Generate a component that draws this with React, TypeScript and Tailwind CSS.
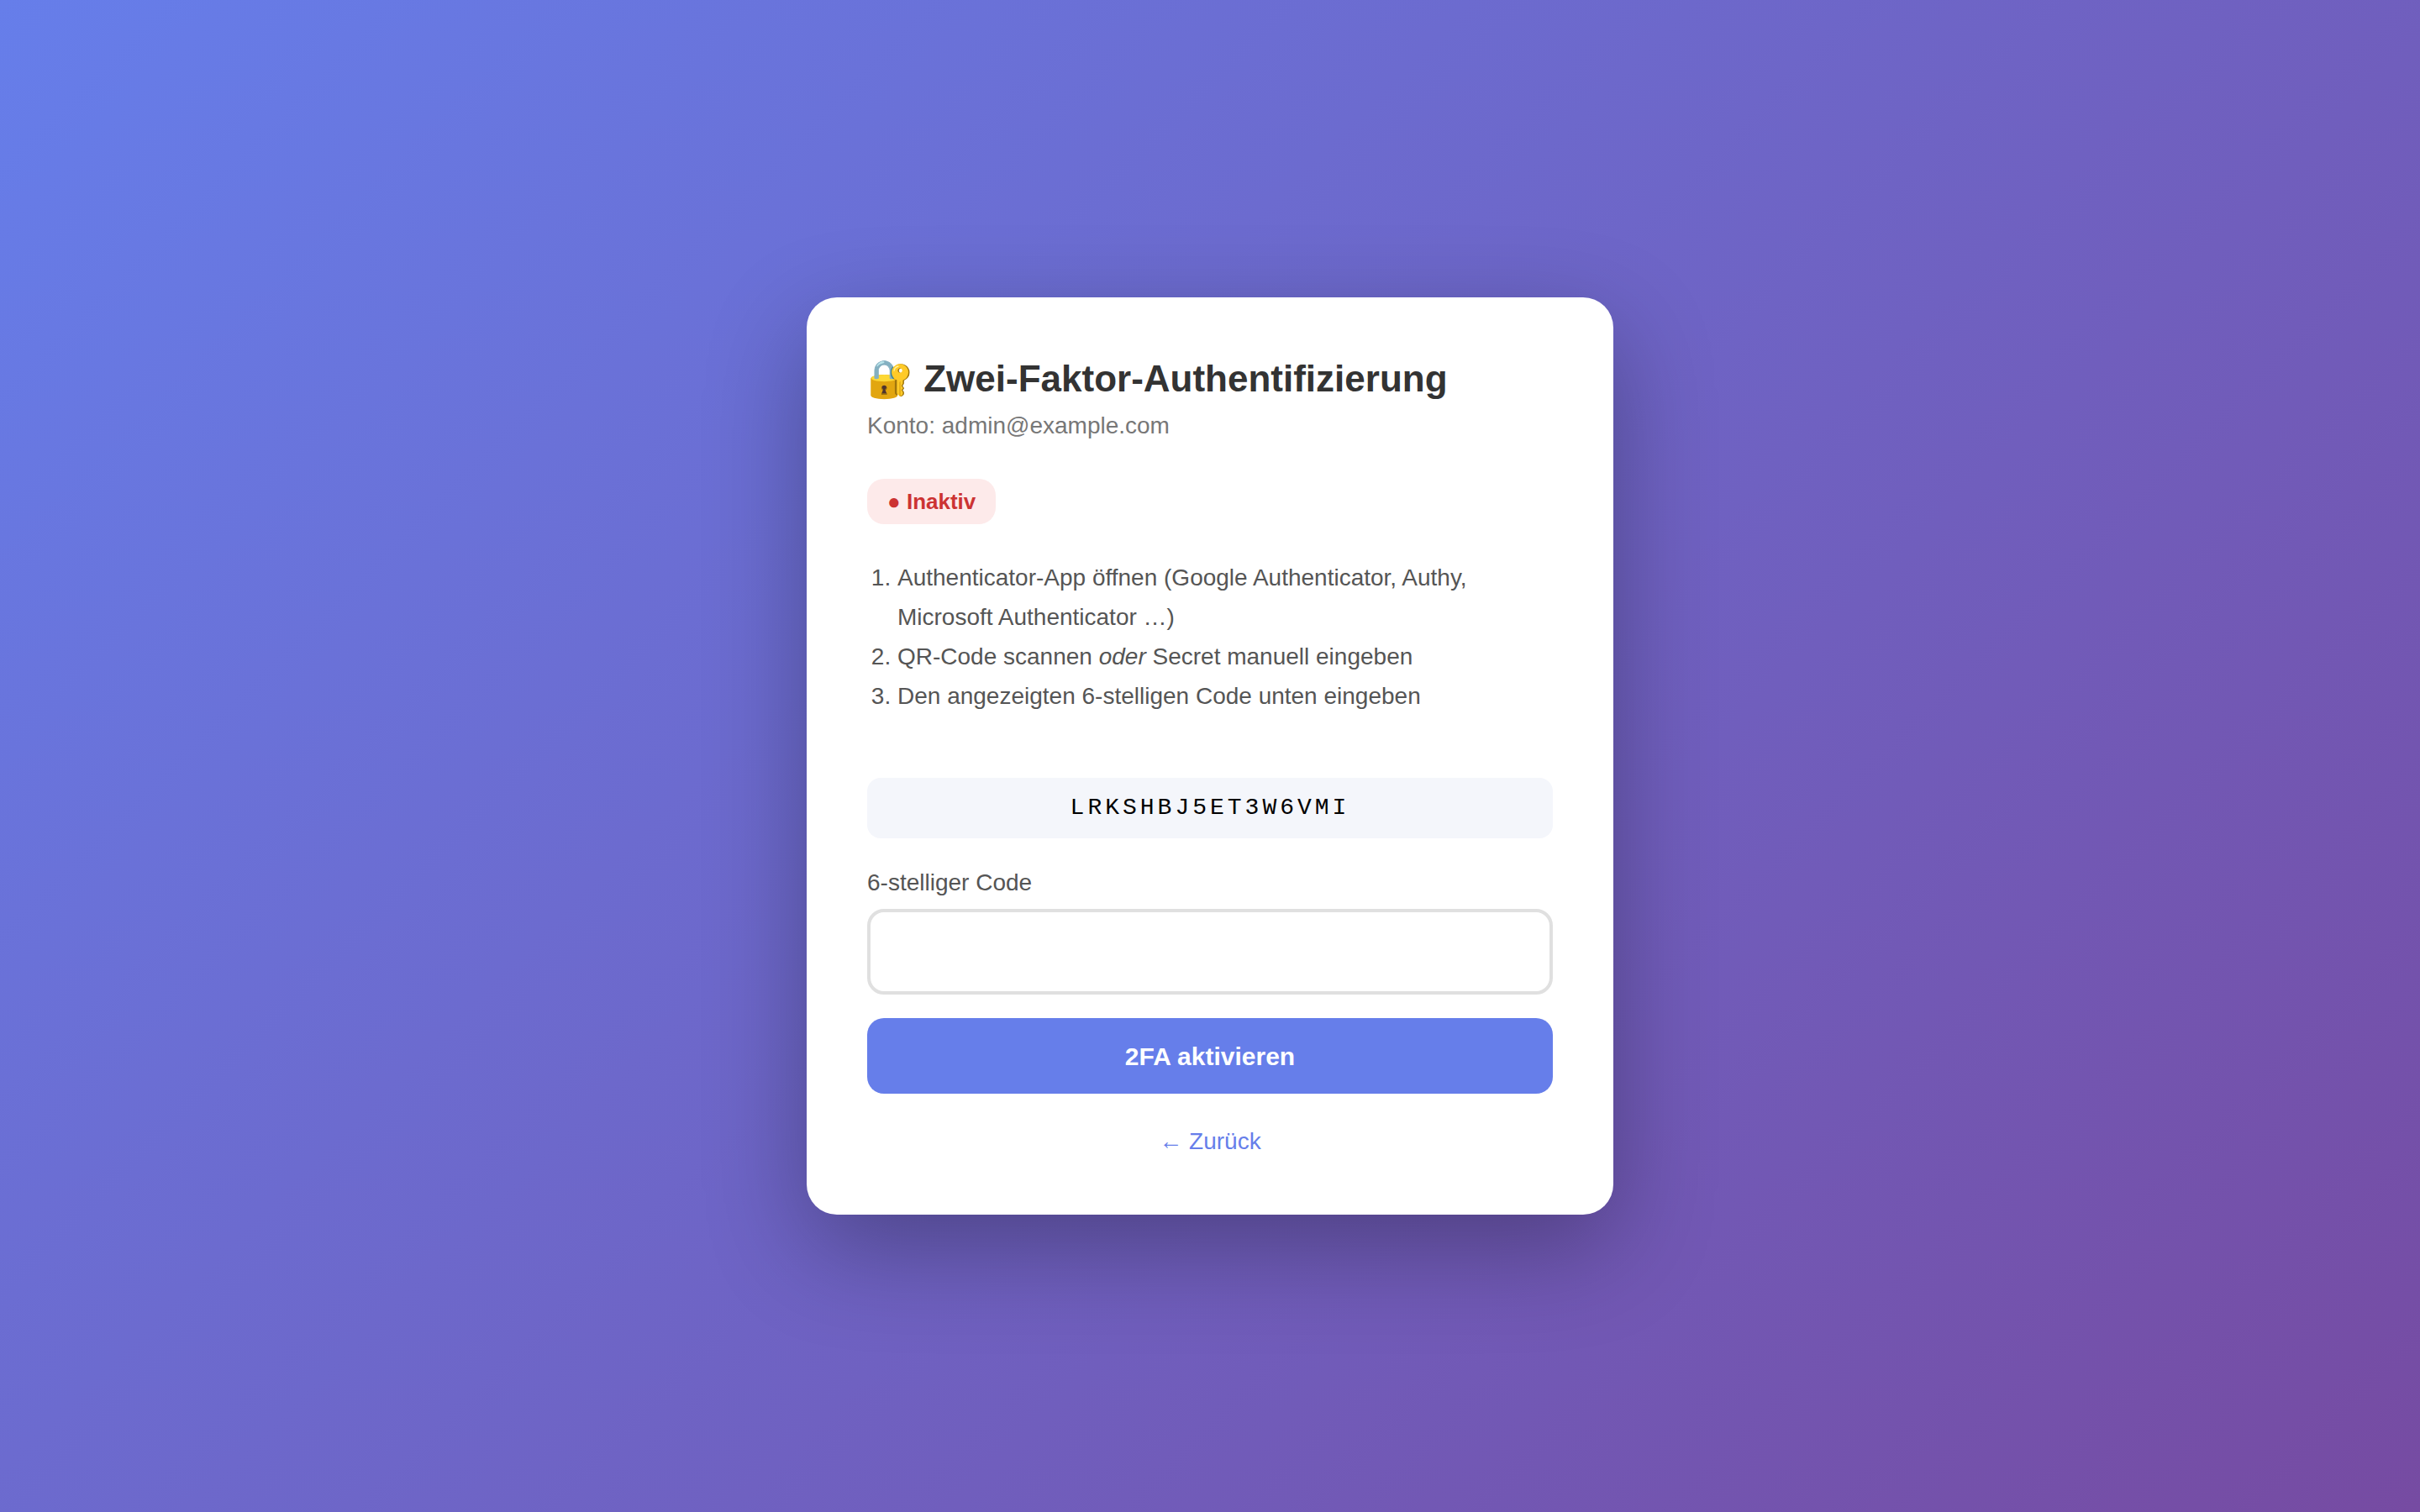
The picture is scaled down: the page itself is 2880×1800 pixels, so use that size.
export default function App() {
  return (
    <main className="flex min-h-screen items-center justify-center bg-[linear-gradient(135deg,#667eea_0%,#764ba2_100%)] font-['Liberation_Sans',Arial,sans-serif]">
      <section className="w-full max-w-[960px] rounded-[36px] bg-white px-[72px] pt-[72px] pb-[70px] shadow-[0_40px_120px_rgba(0,0,0,0.3)]">
        <h1 className="mb-[14px] text-[44px] leading-[50px] font-bold text-[#333]">🔐 Zwei-Faktor-Authentifizierung</h1>
        <p className="mb-[46px] text-[28px] leading-[34px] text-[#777]">Konto: admin@example.com</p>
        <p className="mb-10 w-fit rounded-[20px] bg-[#fdeaea] px-6 py-3 text-[26px] leading-[30px] font-bold text-[#cc3333]">● Inaktiv</p>
        <ol className="mb-[74px] list-decimal pl-9 text-[28px] leading-[47px] text-[#555]">
          <li>Authenticator-App öffnen (Google Authenticator, Authy, Microsoft Authenticator …)</li>
          <li>QR-Code scannen <em>oder</em> Secret manuell eingeben</li>
          <li>Den angezeigten 6-stelligen Code unten eingeben</li>
        </ol>
        <code className="mb-9 block rounded-2xl bg-[#f4f6fb] py-5 text-center font-['Liberation_Mono',monospace] text-[28px] leading-8 tracking-[4px] text-black">LRKSHBJ5ET3W6VMI</code>
        <form>
          <label htmlFor="code" className="mb-[14px] block text-[28px] leading-[34px] text-[#555]">6-stelliger Code</label>
          <input id="code" inputMode="numeric" maxLength={6} className="block h-[102px] w-full rounded-[20px] border-4 border-[#e0e0e0] px-6 text-center text-[44px] outline-none" />
          <button type="button" className="mt-7 block h-[90px] w-full rounded-[20px] bg-[#667eea] text-[30px] font-bold text-white">2FA aktivieren</button>
        </form>
        <a href="#" className="mt-10 block text-center text-[28px] leading-[34px] text-[#667eea]">← Zurück</a>
      </section>
    </main>
  );
}
